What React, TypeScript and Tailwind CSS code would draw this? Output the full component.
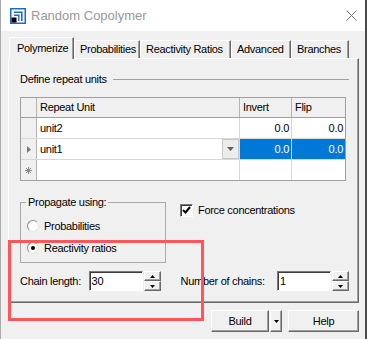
import React from "react";

function SpinButton({ up }: { up?: boolean }) {
  return (
    <div className="flex h-[10px] items-center justify-center border border-t-white border-l-white border-b-[#696969] border-r-[#696969] bg-[#f0f0f0] shadow-[inset_-1px_-1px_0_#a0a0a0]">
      <svg width="5" height="3" viewBox="0 0 5 3">
        {up ? <path d="M2.5 0 L5 3 H0 Z" fill="#000" /> : <path d="M0 0 H5 L2.5 3 Z" fill="#000" />}
      </svg>
    </div>
  );
}

function NumberBox({ value }: { value: string }) {
  return (
    <div className="flex">
      <div className="flex h-[20px] w-[54px] items-center border border-t-[#7a7a7a] border-l-[#7a7a7a] border-b-white border-r-white bg-white pl-[2px] shadow-[inset_1px_1px_0_#3c3c3c]">
        {value}
      </div>
      <div className="ml-px flex w-[17px] flex-col">
        <SpinButton up />
        <SpinButton />
      </div>
    </div>
  );
}

function Radio({ checked, label }: { checked?: boolean; label: string }) {
  return (
    <div className="flex h-[16px] items-center gap-[5px]">
      <div className="flex h-[12px] w-[12px] items-center justify-center rounded-full border border-t-[#8a8a8a] border-l-[#8a8a8a] border-b-[#e6e6e6] border-r-[#e6e6e6] bg-white">
        {checked && <div className="h-[4px] w-[4px] rounded-full bg-black" />}
      </div>
      <span>{label}</span>
    </div>
  );
}

function Tab({ label, width, active }: { label: string; width: string; active?: boolean }) {
  return (
    <div
      className={
        active
          ? "relative z-10 -mb-px flex h-[22px] items-center rounded-tl-[2px] border-l border-t border-r border-l-white border-t-white border-r-[#696969] bg-[#f0f0f0] pl-[7px] shadow-[inset_-1px_0_0_#a0a0a0]"
          : "flex h-[18px] items-center rounded-tl-[2px] border-l border-t border-r border-l-white border-t-white border-r-[#696969] bg-[#f0f0f0] pl-[5px] shadow-[inset_-1px_0_0_#a0a0a0]"
      }
      style={{ width }}
    >
      {label}
    </div>
  );
}

function RaisedButton({ children, className }: { children: React.ReactNode; className: string }) {
  return (
    <div
      className={
        "flex h-[22px] items-center justify-center border border-t-white border-l-white border-b-[#696969] border-r-[#696969] bg-[#f0f0f0] shadow-[inset_-1px_-1px_0_#a0a0a0] " +
        className
      }
    >
      {children}
    </div>
  );
}

export default function App() {
  return (
    <div className="relative h-[339px] w-[367px] overflow-hidden border-l border-r-2 border-l-[#aaaaaa] border-r-[#4a4a4a] bg-[#f0f0f0] font-['Liberation_Sans',Arial,sans-serif] text-[11px] tracking-[-0.3px] text-black">
      {/* Title bar */}
      <div className="flex h-[31px] items-center justify-between bg-white pl-[9px] pr-[8px]">
        <div className="flex items-center gap-[5px]">
          <svg width="16" height="16" viewBox="0 0 16 16">
            <rect x="0.75" y="0.75" width="14.5" height="14.5" fill="#fff" stroke="#1c6cc4" strokeWidth="1.5" />
            <path d="M4 4.2 H11.8 V13" stroke="#1c6cc4" strokeWidth="1.6" fill="none" />
            <path d="M4 7.2 H8.8 V13" stroke="#1c6cc4" strokeWidth="1.4" fill="none" />
            <rect x="1.5" y="9.5" width="5" height="5" fill="#000" />
          </svg>
          <span className="text-[13px] tracking-normal text-[#999999]">Random Copolymer</span>
        </div>
        <svg width="11" height="11" viewBox="0 0 11 11">
          <path d="M0.5 0.5 L10.5 10.5 M10.5 0.5 L0.5 10.5" stroke="#777" strokeWidth="1" />
        </svg>
      </div>

      {/* Tabs */}
      <div className="ml-[7px] w-[351px] pt-[6px]">
        <div className="flex items-end pl-px">
          <Tab label="Polymerize" width="65px" active />
          <Tab label="Probabilities" width="66px" />
          <Tab label="Reactivity Ratios" width="91px" />
          <Tab label="Advanced" width="60px" />
          <Tab label="Branches" width="58px" />
        </div>

        <div className="h-[245px] border border-t-white border-l-white border-b-[#696969] border-r-[#696969] pl-[11px] pr-[9px] shadow-[inset_-1px_-1px_0_#a0a0a0]">
          {/* Define repeat units */}
          <div className="mt-[13px] flex h-[14px] items-center gap-[6px]">
            <span>Define repeat units</span>
            <div className="h-0 flex-1 border-t border-[#a0a0a0]" />
          </div>

          <div className="mt-[11px] w-[326px] border border-[#a0a0a0] bg-white">
            <div className="grid h-[20px] grid-cols-[16px_203px_52px_53px] border-b border-[#a0a0a0] bg-[#f0f0f0]">
              <div className="border-r border-[#b4b4b4]" />
              <div className="flex items-center border-r border-[#b4b4b4] pl-[3px]">Repeat Unit</div>
              <div className="flex items-center border-r border-[#b4b4b4] pl-[3px]">Invert</div>
              <div className="flex items-center pl-[3px]">Flip</div>
            </div>
            <div className="grid h-[21px] grid-cols-[16px_203px_52px_53px] border-b border-[#d8d8d8]">
              <div className="border-r border-[#b4b4b4] bg-[#f0f0f0]" />
              <div className="flex items-center border-r border-[#d8d8d8] pl-[3px]">unit2</div>
              <div className="flex items-center justify-end border-r border-[#d8d8d8] pr-[2px]">0.0</div>
              <div className="flex items-center justify-end pr-[2px]">0.0</div>
            </div>
            <div className="grid h-[21px] grid-cols-[16px_203px_52px_53px] border-b border-[#d8d8d8]">
              <div className="flex items-center justify-center border-r border-[#b4b4b4] bg-[#f0f0f0]">
                <svg width="4" height="7" viewBox="0 0 4 7">
                  <path d="M0 0 L4 3.5 L0 7 Z" fill="#7a7a7a" />
                </svg>
              </div>
              <div className="flex items-stretch justify-between border-r border-[#d8d8d8]">
                <span className="flex items-center pl-[3px]">unit1</span>
                <div className="flex w-[17px] items-center justify-center border border-[#c8c8c8] bg-[#ececec]">
                  <svg width="7" height="4" viewBox="0 0 7 4">
                    <path d="M0 0 H7 L3.5 4 Z" fill="#606060" />
                  </svg>
                </div>
              </div>
              <div className="flex items-center justify-end border-r border-[#d8d8d8] bg-[#0078d7] pr-[2px] text-white">0.0</div>
              <div className="flex items-center justify-end bg-[#0078d7] pr-[2px] text-white">0.0</div>
            </div>
            <div className="grid h-[20px] grid-cols-[16px_203px_52px_53px]">
              <div className="flex items-center justify-center border-r border-[#b4b4b4] bg-[#f0f0f0]">
                <svg width="7" height="7" viewBox="0 0 7 7">
                  <path d="M3.5 0 V7 M0 3.5 H7 M1 1 L6 6 M6 1 L1 6" stroke="#8a8a8a" strokeWidth="1" />
                </svg>
              </div>
              <div className="border-r border-[#d8d8d8]" />
              <div className="border-r border-[#d8d8d8]" />
              <div />
            </div>
          </div>

          {/* Propagate + force */}
          <div className="mt-[15px] flex items-start">
            <fieldset className="h-[67px] w-[146px] border border-[#a8a8a8]">
              <legend className="ml-[5px] px-[2px] leading-[13px]">Propagate using:</legend>
              <div className="flex flex-col gap-[6px] pl-[6px] pt-[9px]">
                <Radio label="Probabilities" />
                <Radio label="Reactivity ratios" checked />
              </div>
            </fieldset>
            <div className="ml-[14px] mt-[6px] flex items-center gap-[5px]">
              <div className="flex h-[13px] w-[13px] items-center justify-center border border-t-[#7a7a7a] border-l-[#7a7a7a] border-b-white border-r-white bg-white shadow-[inset_1px_1px_0_#3c3c3c]">
                <svg width="9" height="8" viewBox="0 0 9 8">
                  <path d="M1 4 L3.5 6.5 L8 1" stroke="#000" strokeWidth="2" fill="none" />
                </svg>
              </div>
              <span>Force concentrations</span>
            </div>
          </div>

          {/* Chain length / number of chains */}
          <div className="mt-[8px] flex h-[20px] items-center">
            <span className="w-[69px]">Chain length:</span>
            <NumberBox value="30" />
            <span className="ml-[20px] w-[97px]">Number of chains:</span>
            <NumberBox value="1" />
          </div>
        </div>
      </div>

      {/* Bottom buttons */}
      <div className="mt-[7px] flex justify-end pr-[6px]">
        <RaisedButton className="w-[58px]">Build</RaisedButton>
        <RaisedButton className="ml-px w-[12px]">
          <svg width="5" height="3" viewBox="0 0 5 3">
            <path d="M0 0 H5 L2.5 3 Z" fill="#000" />
          </svg>
        </RaisedButton>
        <RaisedButton className="ml-[6px] w-[71px]">Help</RaisedButton>
      </div>

      {/* Red annotation rectangle */}
      <div className="pointer-events-none absolute left-[7px] top-[240px] h-[81px] w-[196px] border-[3px] border-[#ff5757]" />
    </div>
  );
}
